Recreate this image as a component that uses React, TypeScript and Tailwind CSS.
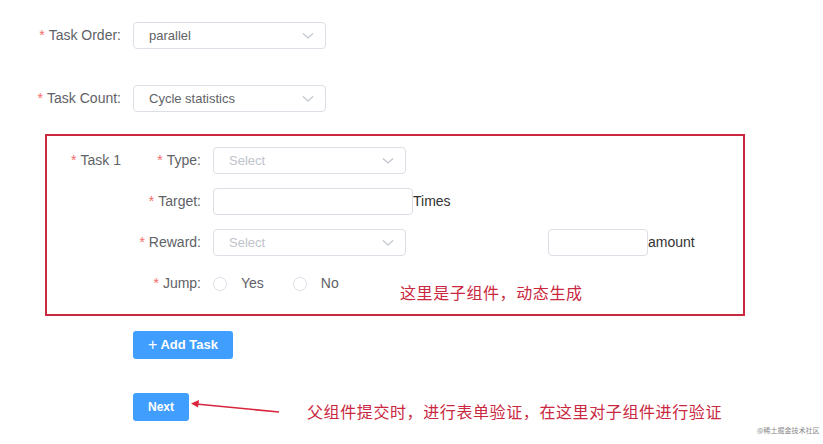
import React from 'react'

const sans = "font-['Liberation_Sans','Noto_Sans_CJK_SC',sans-serif]"
const cjk = "font-['Noto_Sans_CJK_SC',sans-serif]"

const Chevron = () => (
  <svg width="12" height="8" viewBox="0 0 12 8" className="shrink-0">
    <path d="M1 1.5 L6 6 L11 1.5" fill="none" stroke="#c0c4cc" strokeWidth="1.1" />
  </svg>
)

const Star = () => <span className="text-[#f56c6c] mr-[4px]">*</span>

interface SelectProps {
  value?: string
  placeholder?: string
}

const SelectBox: React.FC<SelectProps> = ({ value, placeholder }) => (
  <div className="w-[193px] h-[27px] border border-[#dcdfe6] rounded-[4px] bg-white flex items-center justify-between pl-[15px] pr-[11px]">
    <span className={`text-[13px] ${value ? 'text-[#606266]' : 'text-[#c0c4cc]'}`}>
      {value ?? placeholder}
    </span>
    <Chevron />
  </div>
)

const Radio: React.FC<{ label: string }> = ({ label }) => (
  <div className="flex items-center">
    <span className="w-[14px] h-[14px] rounded-full border border-[#dcdfe6] bg-white" />
    <span className="ml-[14px] text-[14px] text-[#606266]">{label}</span>
  </div>
)

const SubLabel: React.FC<{ text: string }> = ({ text }) => (
  <div className="w-[80px] pr-[12px] text-right text-[14px] text-[#606266]">
    <Star />
    {text}
  </div>
)

export default function App() {
  return (
    <div className={`relative w-[823px] h-[444px] bg-white overflow-hidden ${sans}`}>
      <div className="pt-[22px]">
        {/* Task Order */}
        <div className="flex items-center">
          <div className="w-[133px] pr-[12px] text-right text-[14px] text-[#606266]">
            <Star />
            Task Order:
          </div>
          <SelectBox value="parallel" />
        </div>

        {/* Task Count */}
        <div className="flex items-center mt-[36px]">
          <div className="w-[133px] pr-[12px] text-right text-[14px] text-[#606266]">
            <Star />
            Task Count:
          </div>
          <SelectBox value="Cycle statistics" />
        </div>

        {/* child component */}
        <div className="relative ml-[45px] mt-[22px] w-[700px] h-[182px] border-2 border-[#c9283f] flex pt-[11px]">
          <div className="w-[86px] pr-[12px] text-right text-[14px] text-[#606266] h-[27px] leading-[27px]">
            <Star />
            Task 1
          </div>
          <div className="flex flex-col gap-[14px]">
            <div className="flex items-center">
              <SubLabel text="Type:" />
              <SelectBox placeholder="Select" />
            </div>
            <div className="flex items-center">
              <SubLabel text="Target:" />
              <div className="w-[200px] h-[27px] border border-[#dcdfe6] rounded-[4px] bg-white" />
              <span className="text-[14px] text-[#333]">Times</span>
            </div>
            <div className="flex items-center">
              <SubLabel text="Reward:" />
              <SelectBox placeholder="Select" />
              <div className="ml-[142px] w-[100px] h-[27px] border border-[#dcdfe6] rounded-[4px] bg-white" />
              <span className="text-[14px] text-[#333]">amount</span>
            </div>
            <div className="flex items-center h-[27px]">
              <SubLabel text="Jump:" />
              <div className="flex items-center gap-[29px]">
                <Radio label="Yes" />
                <Radio label="No" />
              </div>
            </div>
          </div>
          <span className={`absolute left-[353px] top-[144px] text-[16px] tracking-[0.6px] text-[#c9283f] whitespace-nowrap ${cjk}`}>
            这里是子组件，动态生成
          </span>
        </div>

        {/* buttons */}
        <div className="ml-[133px] mt-[15px] flex flex-col items-start gap-[34px]">
          <button className="w-[100px] h-[28px] rounded-[3px] bg-[#409eff] text-white text-[13px] font-bold flex items-center justify-center">
            <span className="text-[16px] font-normal mr-[3px] leading-none">+</span>
            Add Task
          </button>
          <button className="w-[56px] h-[28px] rounded-[3px] bg-[#409eff] text-white text-[12px] font-bold">
            Next
          </button>
        </div>
      </div>

      {/* annotation arrow */}
      <svg className="absolute left-0 top-0" width="823" height="444">
        <line x1="279" y1="412" x2="196" y2="404" stroke="#d7263d" strokeWidth="1.6" />
        <path d="M191 403.5 L199 400 L198 407.5 Z" fill="#d7263d" />
      </svg>
      <span className={`absolute left-[307px] top-[399px] text-[16px] tracking-[0.6px] text-[#c9283f] whitespace-nowrap ${cjk}`}>
        父组件提交时，进行表单验证，在这里对子组件进行验证
      </span>
      <span className={`absolute left-[757px] top-[425px] text-[7px] text-[#888] whitespace-nowrap ${cjk}`}>
        @稀土掘金技术社区
      </span>
    </div>
  )
}
